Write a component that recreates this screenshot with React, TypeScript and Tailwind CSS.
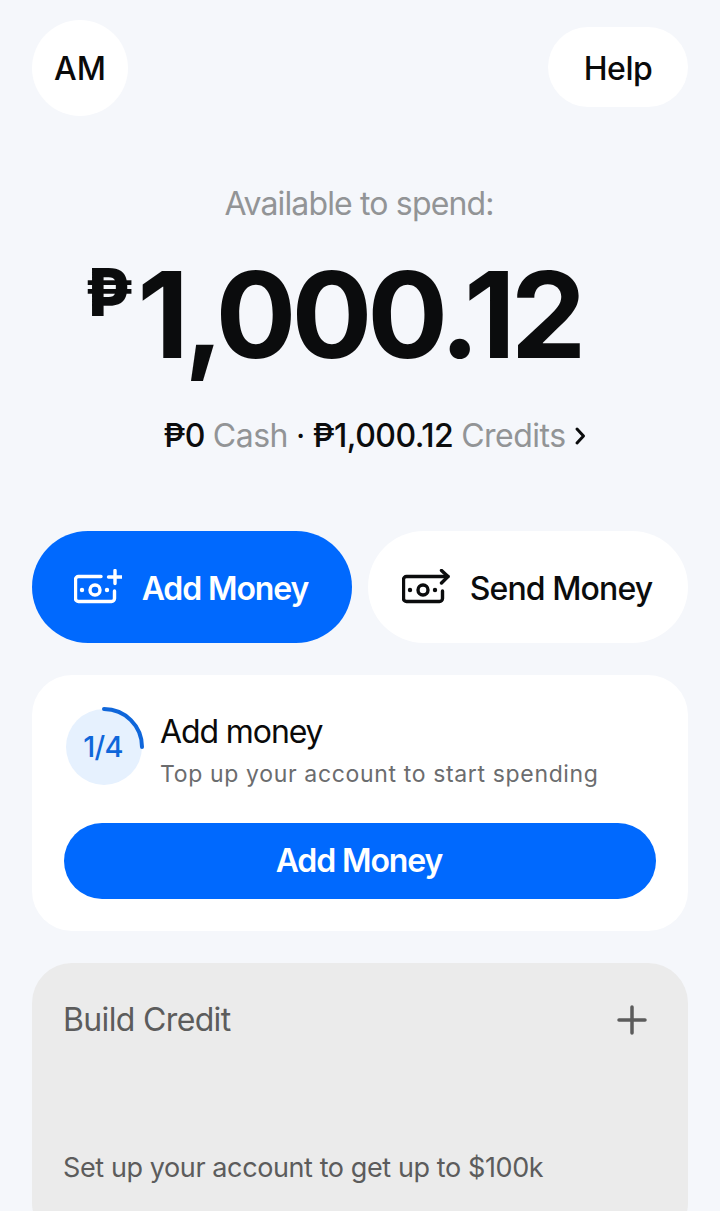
import React from 'react';

const MoneyIcon: React.FC<{ kind: 'plus' | 'arrow' }> = ({ kind }) => (
  <svg className="shrink-0" width="48" height="36" viewBox="0 0 48 36" fill="none" stroke="currentColor" strokeWidth="3.4" strokeLinecap="round" strokeLinejoin="round">
    {/* note outline, open at the top right where the badge sits */}
    <path d={kind === 'plus' ? 'M27 7.5H4.5a3 3 0 0 0-3 3v19a3 3 0 0 0 3 3h33a3 3 0 0 0 3-3V22' : 'M46 7.5H4.5a3 3 0 0 0-3 3v19a3 3 0 0 0 3 3h33a3 3 0 0 0 3-3V22'} />
    <circle cx="21" cy="21" r="5" />
    <circle cx="8" cy="21" r="1.2" fill="currentColor" strokeWidth="2" />
    <circle cx="33" cy="21" r="1.2" fill="currentColor" strokeWidth="2" />
    {kind === 'plus' ? (
      <path d="M41 1.5v13M34.5 8h13" />
    ) : (
      <path d="M39.5 1.5L46 7.5 39.5 14" />
    )}
  </svg>
);

const Peso: React.FC<{ className?: string }> = ({ className }) => <span className={className}>₱</span>;

export default function App() {
  return (
    <div className="h-[1211px] overflow-hidden bg-[#f5f7fb] px-8 font-['Inter',sans-serif]">
      <header className="flex items-start justify-between pt-5">
        <div className="flex h-24 w-24 items-center justify-center rounded-full bg-white pt-[2px] text-[32px] font-medium text-[#0a0a0a]">
          AM
        </div>
        <div className="mt-[7px] flex h-[80px] w-[140px] items-center justify-center rounded-full bg-white pt-[3px] text-[32px] font-medium tracking-[-0.5px] text-[#0a0a0a]">
          Help
        </div>
      </header>

      <section className="flex flex-col items-center">
        <div className="mt-[65px] pr-[2px] text-[32px] leading-[46px] tracking-[-0.85px] text-[#929496]">Available to spend:</div>
        <div className="mt-[18px] mr-[54px] flex h-[140px] items-start text-[#0b0c0d]">
          <Peso className="mt-[14px] mr-[4px] text-[66px] leading-[66px] font-extrabold" />
          <span className="text-[120px] leading-[140px] font-bold tracking-[-5px]">1,000.12</span>
        </div>
        <div className="mt-[28px] ml-[29px] flex items-center text-[32px] leading-[46px] tracking-[-0.5px] text-[#929496]">
          <span className="font-medium text-[#0b0c0d]">₱0</span>
          <span className="ml-2">Cash</span>
          <span className="mx-2 text-[#0b0c0d]">·</span>
          <span className="font-medium text-[#0b0c0d]">₱1,000.12</span>
          <span className="ml-2">Credits</span>
          <svg className="ml-2 text-[#0b0c0d]" width="12" height="20" viewBox="0 0 12 20" fill="none" stroke="currentColor" strokeWidth="3" strokeLinecap="round" strokeLinejoin="round">
            <path d="M3 3l6.5 7L3 17" />
          </svg>
        </div>
      </section>

      <div className="mt-[72px] grid grid-cols-2 gap-4">
        <div className="flex h-28 items-center justify-center gap-5 rounded-full bg-[#0069fe] pr-[2px] text-[32px] font-semibold tracking-[-1.1px] text-white">
          <MoneyIcon kind="plus" />
          <span className="pt-[3px]">Add Money</span>
        </div>
        <div className="flex h-28 items-center justify-center gap-5 rounded-full bg-white pr-[2px] text-[32px] font-medium tracking-[-0.9px] text-[#0b0c0d]">
          <MoneyIcon kind="arrow" />
          <span className="pt-[3px]">Send Money</span>
        </div>
      </div>

      <section className="mt-8 rounded-[40px] bg-white px-8 py-8">
        <div className="flex items-start gap-4">
          <div className="relative flex h-20 w-20 shrink-0 items-center justify-center">
            <div className="flex h-[76px] w-[76px] items-center justify-center rounded-full bg-[#e6f1fe] pr-[2px] text-[29px] font-medium tracking-[-0.8px] text-[#0f66da]">
              1/4
            </div>
            <svg className="absolute inset-0" width="80" height="80" viewBox="0 0 80 80" fill="none">
              <path d="M40 2a38 38 0 0 1 38 38" stroke="#0f66da" strokeWidth="4" strokeLinecap="round" />
            </svg>
          </div>
          <div className="min-w-0 pt-[3px]">
            <div className="text-[32px] leading-[44px] tracking-[-1.1px] text-[#0a0a0a]">Add money</div>
            <div className="mt-1 text-[23px] leading-[32px] tracking-[0.65px] text-[#6b6c6e]">Top up your account to start spending</div>
          </div>
        </div>
        <div className="mt-[33px] flex h-[76px] items-center justify-center rounded-full bg-[#0069fe] pr-[2px] text-[32px] font-semibold tracking-[-1.1px] text-white">
          Add Money
        </div>
      </section>

      <section className="mt-8 h-[280px] rounded-[40px] bg-[#ebebeb] px-8 pt-[35px]">
        <div className="flex items-center justify-between">
          <div className="-ml-px text-[32px] leading-[44px] tracking-[-0.65px] text-[#5c5c5c]">Build Credit</div>
          <svg className="mr-2" width="32" height="32" viewBox="0 0 32 32" fill="none" stroke="#5c5c5c" strokeWidth="3.5" strokeLinecap="round">
            <path d="M16 3v26M3 16h26" />
          </svg>
        </div>
        <div className="mt-[106px] -ml-px text-[27px] leading-[40px] tracking-[-0.4px] text-[#5c5c5c]">Set up your account to get up to $100k</div>
      </section>
    </div>
  );
}
